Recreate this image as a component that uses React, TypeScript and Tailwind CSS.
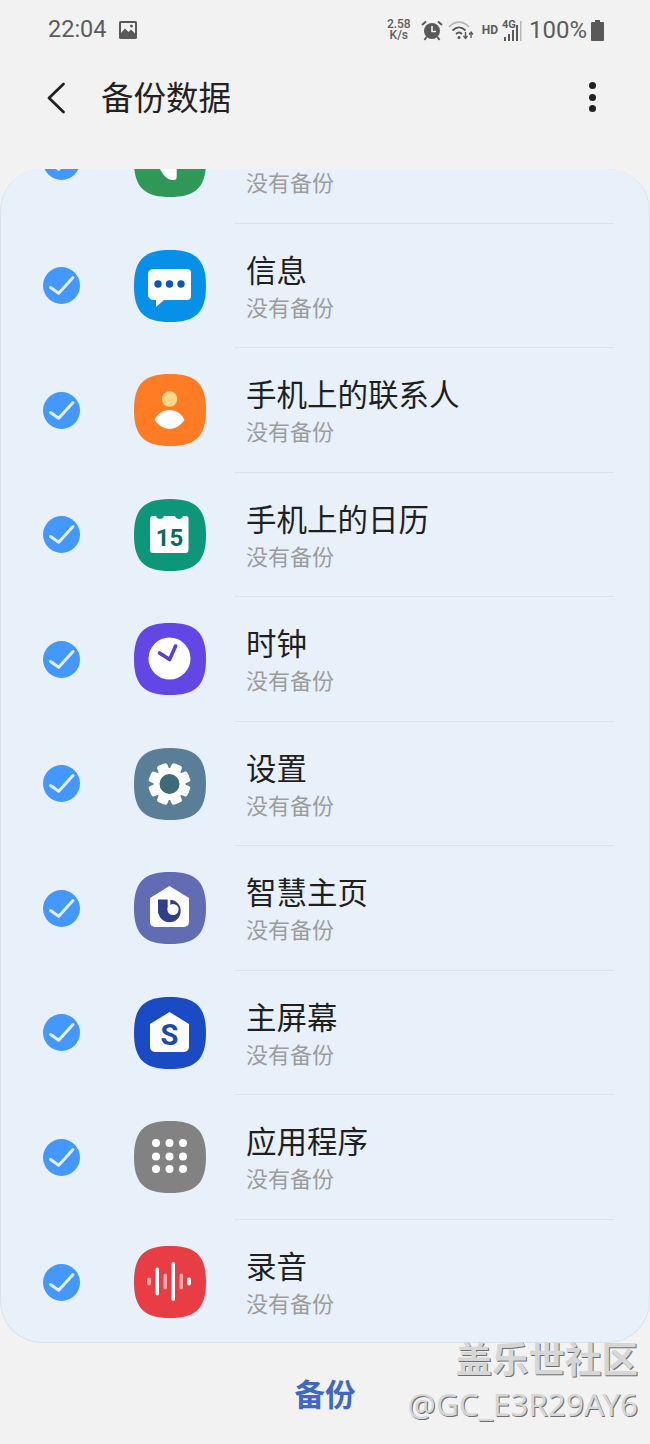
const squircle =
  "M36 0C62 0 72 10 72 36C72 62 62 72 36 72C10 72 0 62 0 36C0 10 10 0 36 0Z";

function AppIcon({ color, children }: { color: string; children: React.ReactNode }) {
  return (
    <svg viewBox="0 0 72 72" className="h-[72px] w-[72px] shrink-0">
      <path d={squircle} fill={color} />
      {children}
    </svg>
  );
}

function Check() {
  return (
    <svg viewBox="0 0 37 37" className="h-[37px] w-[37px] shrink-0">
      <circle cx="18.5" cy="18.5" r="18.5" fill="#4598fb" />
      <path
        d="M7.5 20.5L15.7 26.3L30 10.5"
        fill="none"
        stroke="#e3efff"
        strokeWidth="3"
        strokeLinecap="round"
        strokeLinejoin="round"
      />
    </svg>
  );
}

const gearTeeth = [0, 45, 90, 135, 180, 225, 270, 315];

const rows: { name: string; icon: React.ReactNode }[] = [
  {
    name: "电话",
    icon: (
      <AppIcon color="#2f9858">
        <path d="M26 30H42.700V52C42.700 54.500 41 55 39 55C33 55 29 50 26 44Z" fill="#ffffff" />
      </AppIcon>
    ),
  },
  {
    name: "信息",
    icon: (
      <AppIcon color="#0690e8">
        <path
          d="M19 19H53A4 4 0 0 1 57 23V46A4 4 0 0 1 53 50H30L22 57V50H19A5 5 0 0 1 14 45V24A5 5 0 0 1 19 19Z"
          fill="#ffffff"
        />
        <circle cx="24" cy="34" r="3.7" fill="#0b57b8" />
        <circle cx="35.5" cy="34" r="3.7" fill="#0b57b8" />
        <circle cx="47" cy="34" r="3.7" fill="#0b57b8" />
      </AppIcon>
    ),
  },
  {
    name: "手机上的联系人",
    icon: (
      <AppIcon color="#ff7c24">
        <circle cx="35.5" cy="25" r="7.7" fill="#fdd78a" />
        <path
          d="M20.500 46C23 40 29 36 35.500 36C42 36 48 40 50.500 46C47 51 41 55 35.500 55C30 55 24 51 20.500 46Z"
          fill="#ffffff"
        />
      </AppIcon>
    ),
  },
  {
    name: "手机上的日历",
    icon: (
      <AppIcon color="#0d967a">
        <path
          d="M19 17H22C23 21 29 21 30 17H41C42 21 48 21 49 17H52A2.500 2.500 0 0 1 54.500 19.500V51A3 3 0 0 1 51.500 54H19A3 3 0 0 1 16 51V20A3 3 0 0 1 19 17Z"
          fill="#ffffff"
        />
        <text
          x="35.500"
          y="47"
          textAnchor="middle"
          fontSize="24"
          fontWeight="700"
          fill="#0d6b5c"
          fontFamily="Roboto, sans-serif"
        >
          15
        </text>
      </AppIcon>
    ),
  },
  {
    name: "时钟",
    icon: (
      <AppIcon color="#6347e5">
        <circle cx="35.5" cy="35.5" r="21" fill="#ffffff" />
        <path
          d="M25.500 30L35.600 36.600L41.600 23"
          fill="none"
          stroke="#5a3fd0"
          strokeWidth="3.6"
          strokeLinecap="round"
          strokeLinejoin="round"
        />
      </AppIcon>
    ),
  },
  {
    name: "设置",
    icon: (
      <AppIcon color="#5a7e98">
        <circle cx="35.5" cy="36" r="16" fill="#ffffff" />
        {gearTeeth.map((a) => (
          <rect
            key={a}
            x="30"
            y="15"
            width="11"
            height="9"
            rx="2.5"
            fill="#ffffff"
            transform={`rotate(${a + 22.5} 35.5 36)`}
          />
        ))}
        <circle cx="35.5" cy="36" r="10" fill="#3f6a78" />
      </AppIcon>
    ),
  },
  {
    name: "智慧主页",
    icon: (
      <AppIcon color="#616cb2">
        <path
          d="M35.500 14L55 26V50A5 5 0 0 1 50 55H21A5 5 0 0 1 16 50V26Z"
          fill="#ffffff"
        />
        {/* bixby b: stem and ring, with a slit left open next to the stem */}
        <rect x="24" y="27.500" width="9.700" height="14" fill="#2f4088" />
        <circle cx="35.500" cy="39" r="11.200" fill="#2f4088" />
        <circle cx="39" cy="37.500" r="5.600" fill="#ffffff" />
        <rect x="33.700" y="26" width="2.600" height="11.500" fill="#ffffff" />
      </AppIcon>
    ),
  },
  {
    name: "主屏幕",
    icon: (
      <AppIcon color="#1a4bc4">
        <path
          d="M35.500 15L55 27V50A5 5 0 0 1 50 55H21A5 5 0 0 1 16 50V27Z"
          fill="#ffffff"
        />
        <text
          x="35.500"
          y="48"
          textAnchor="middle"
          fontSize="29"
          fontWeight="700"
          fill="#1a49a8"
          fontFamily="Roboto, sans-serif"
        >
          S
        </text>
      </AppIcon>
    ),
  },
  {
    name: "应用程序",
    icon: (
      <AppIcon color="#828282">
        {[22, 35.5, 49].map((x) =>
          [22, 35.5, 48].map((y) => (
            <circle key={`${x}-${y}`} cx={x} cy={y} r="4" fill="#ffffff" />
          ))
        )}
      </AppIcon>
    ),
  },
  {
    name: "录音",
    icon: (
      <AppIcon color="#e93d46">
        <rect x="13" y="31.5" width="4" height="8" rx="2" fill="#f9a8ad" />
        <rect x="21.5" y="21.5" width="3.5" height="28" rx="1.75" fill="#ffffff" />
        <rect x="29.5" y="27.5" width="3.5" height="16" rx="1.75" fill="#f9a8ad" />
        <rect x="37.5" y="16" width="3.5" height="39" rx="1.75" fill="#ffffff" />
        <rect x="45.5" y="27.5" width="3.5" height="16" rx="1.75" fill="#f9a8ad" />
        <rect x="53" y="31.5" width="4" height="8" rx="2" fill="#ffffff" />
      </AppIcon>
    ),
  },
];

function StatusBar() {
  return (
    <div className="flex h-[60px] shrink-0 items-center pl-[48px] pr-[46px] font-['Roboto',sans-serif] text-[#5c5c5c]">
      <span className="text-[23.500px] leading-none">22:04</span>
      {/* picture notification */}
      <svg viewBox="0 0 18 18" className="ml-[12px] h-[18px] w-[18px]">
        <rect width="18" height="18" rx="1.5" fill="#595959" />
        <rect x="2" y="2" width="14" height="11" fill="#f2f2f2" />
        <path d="M2 12L6 7.500L9.500 11L12 8.500L16 12.500V16H2Z" fill="#595959" />
        <circle cx="12.500" cy="5" r="1.500" fill="#595959" />
      </svg>
      <div className="ml-auto flex flex-col items-center text-[12px] font-medium leading-[11px]">
        <span>2.58</span>
        <span>K/s</span>
      </div>
      <svg viewBox="0 0 22 21" className="ml-[10px] h-[21px] w-[22px]">
        <circle cx="11" cy="11" r="8" fill="#595959" />
        <path d="M11 6V11.500H15" fill="none" stroke="#f2f2f2" strokeWidth="1.600" />
        <path d="M1 5L5 1.500M21 5L17 1.500" stroke="#595959" strokeWidth="2" />
        <path d="M5.500 17L3.500 20M16.500 17L18.500 20" stroke="#595959" strokeWidth="2" />
      </svg>
      <svg viewBox="0 0 26 20" className="ml-[5px] h-[20px] w-[26px]">
        <path d="M1 7C7 0.500 15 0.500 21 7" fill="none" stroke="#b5b5b5" strokeWidth="1.800" />
        <path d="M4.500 10.500C8.500 6.500 13.500 6.500 17.500 10.500" fill="none" stroke="#595959" strokeWidth="1.800" />
        <path d="M8 14C10 12 12 12 14 14" fill="none" stroke="#595959" strokeWidth="1.800" />
        <circle cx="11" cy="17.500" r="1.500" fill="#595959" />
        <path d="M17.500 12V18M15.500 16L17.500 18.500L19.500 16" fill="none" stroke="#595959" strokeWidth="1.400" />
        <path d="M23 18V12.500M21 14.500L23 12L25 14.500" fill="none" stroke="#595959" strokeWidth="1.400" />
      </svg>
      <span className="ml-[8px] text-[12px] font-bold leading-none">HD</span>
      <div className="relative ml-[3px] h-[22px] w-[22px]">
        <span className="absolute left-[1px] top-0 text-[11px] font-bold leading-none">4G</span>
        <svg viewBox="0 0 22 22" className="h-[22px] w-[22px]">
          <rect x="3" y="18" width="2" height="4" fill="#595959" />
          <rect x="7" y="15" width="2" height="7" fill="#595959" />
          <rect x="11" y="11" width="2" height="11" fill="#595959" />
          <rect x="15" y="6" width="2" height="16" fill="#595959" />
          <rect x="19" y="2" width="1.500" height="20" fill="#b5b5b5" />
        </svg>
      </div>
      <span className="ml-[6px] text-[24px] leading-none">100%</span>
      <svg viewBox="0 0 13 21" className="ml-[4px] h-[21px] w-[13px]">
        <path d="M4 0H9V2H12A1 1 0 0 1 13 3V20A1 1 0 0 1 12 21H1A1 1 0 0 1 0 20V3A1 1 0 0 1 1 2H4Z" fill="#595959" />
      </svg>
    </div>
  );
}

function Header() {
  return (
    <div className="flex h-[109px] shrink-0 items-start pl-[46px] pr-[54px] pt-[22px]">
      <svg viewBox="0 0 20 32" className="h-[32px] w-[20px] shrink-0">
        <path
          d="M17.500 2L3 16L17.500 30"
          fill="none"
          stroke="#222222"
          strokeWidth="2.800"
          strokeLinecap="round"
          strokeLinejoin="round"
        />
      </svg>
      <h1 className="ml-[35px] -mt-[6px] text-[32.500px] font-normal leading-[40px] text-[#222222]">备份数据</h1>
      <div className="ml-auto flex flex-col gap-[4.500px]">
        <span className="h-[7px] w-[7px] rounded-full bg-[#222222]" />
        <span className="h-[7px] w-[7px] rounded-full bg-[#222222]" />
        <span className="h-[7px] w-[7px] rounded-full bg-[#222222]" />
      </div>
    </div>
  );
}

export default function App() {
  return (
    <div className="relative flex h-[1444px] w-[650px] flex-col overflow-hidden bg-[#f2f2f2] font-['Noto_Sans_CJK_SC','Noto_Sans',sans-serif]">
      <StatusBar />
      <Header />
      <div className="h-[1174px] shrink-0 overflow-hidden rounded-[42px] border border-t-0 border-[#d8e0ec] bg-[#e8f1fa]">
        <div className="-mt-[70px]">
          {rows.map((row, i) => (
            <div key={row.name} className="flex h-[124.500px] flex-col">
              <div className="flex flex-1 items-center pl-[42px] pt-[1px]">
                <Check />
                <div className="ml-[54px]">{row.icon}</div>
                <div className="ml-[40px] flex flex-col">
                  <span className="text-[30.500px] leading-[41px] text-[#1f1f1f]">{row.name}</span>
                  <span className="text-[22px] leading-[33px] text-[#9c9c9c]">没有备份</span>
                </div>
              </div>
              {i < rows.length - 1 && <div className="ml-[234px] mr-[35px] h-px bg-[#dde2e8]" />}
            </div>
          ))}
        </div>
      </div>
      <div className="flex flex-1 items-center justify-center">
        <span className="text-[30.500px] font-bold leading-none text-[#3f68c4]">备份</span>
      </div>
      {/* watermark sits on top of the card edge */}
      <div className="absolute bottom-[17px] right-[12px] flex flex-col items-end">
        <span className="text-[36.500px] font-bold leading-[46px] text-[#d6d6d6] [text-shadow:1px_1px_0_#6e6e6e]">
          盖乐世社区
        </span>
        <span className="font-['Noto_Sans',sans-serif] text-[31.500px] leading-[46px] text-[#d6d6d6] [text-shadow:1px_1px_0_#6e6e6e]">
          @GC_E3R29AY6
        </span>
      </div>
    </div>
  );
}
